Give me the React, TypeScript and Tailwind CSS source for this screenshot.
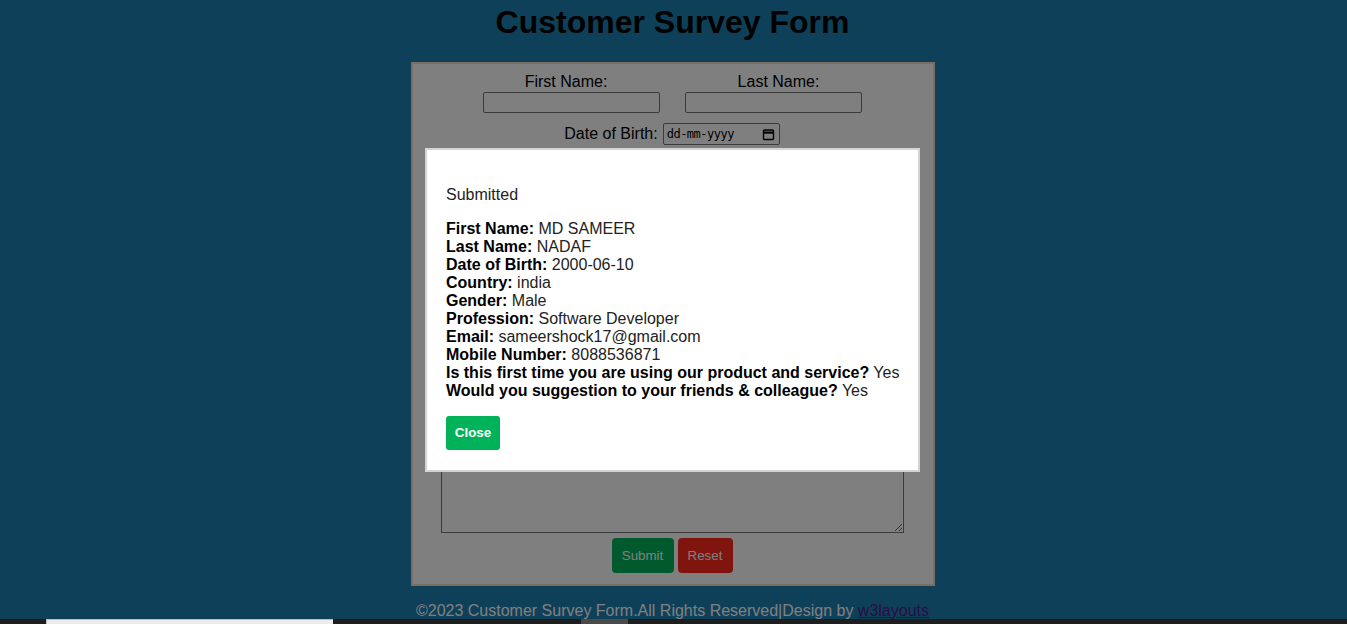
import React from 'react';

const details: Array<[string, string]> = [
  ['First Name:', 'MD SAMEER'],
  ['Last Name:', 'NADAF'],
  ['Date of Birth:', '2000-06-10'],
  ['Country:', 'india'],
  ['Gender:', 'Male'],
  ['Profession:', 'Software Developer'],
  ['Email:', 'sameershock17@gmail.com'],
  ['Mobile Number:', '8088536871'],
  ['Is this first time you are using our product and service?', 'Yes'],
  ['Would you suggestion to your friends & colleague?', 'Yes'],
];

function CalendarIcon() {
  return (
    <svg width="13" height="13" viewBox="0 0 13 13" fill="none" stroke="#000" strokeWidth="1.4">
      <rect x="1.5" y="2" width="10" height="9.5" rx="1" />
      <line x1="1.5" y1="4.6" x2="11.5" y2="4.6" strokeWidth="2.2" />
    </svg>
  );
}

export default function App() {
  return (
    <div className="min-h-screen bg-[#1c80b2] font-['Liberation_Sans',Arial,sans-serif] text-black">
      <h1 className="pt-[4px] pr-[2px] text-center text-[32px] font-bold leading-[37px]">Customer Survey Form</h1>

      <form className="ml-[411px] mt-[21px] flex h-[524px] w-[524px] flex-col items-center border-2 border-[#f0dcc4] bg-white pt-[9px] pr-[2px] text-[16px] leading-[18px]">
        <div className="flex gap-[25px]">
          <div className="flex flex-col items-center">
            <label className="pr-[10px]">First Name:</label>
            <input className="mt-[1px] h-[21px] w-[177px] rounded-[2px] border border-[#767676]" />
          </div>
          <div className="flex flex-col items-center">
            <label className="pl-[11px]">Last Name:</label>
            <input className="mt-[1px] h-[21px] w-[177px] rounded-[2px] border border-[#767676]" />
          </div>
        </div>

        <div className="mt-[10px] flex h-[22px] items-center gap-[5px]">
          <span>Date of Birth:</span>
          <div className="flex h-[22px] w-[117px] items-center justify-between rounded-[2px] border border-[#767676] pl-[3px] pr-[4px] font-['DejaVu_Sans_Mono',monospace] text-[12px] tracking-[-0.5px]">
            <span>dd-mm-yyyy</span>
            <CalendarIcon />
          </div>
        </div>

        {/* rest of the fields sit behind the dialog */}
        <div className="h-[288px]" />

        <textarea className="h-[100px] w-[463px] border border-[#767676]" />

        <div className="mt-[5px] flex gap-[4px]">
          <button type="button" className="h-[35px] w-[62px] rounded-[4px] bg-[#00b45a] text-[13.33px] text-white">Submit</button>
          <button type="button" className="h-[35px] w-[55px] rounded-[4px] bg-[#ff2a1c] text-[13.33px] text-white">Reset</button>
        </div>
      </form>

      <footer className="mt-[16px] pr-[2px] text-center leading-[18px] text-white">
        ©2023 Customer Survey Form.All Rights Reserved|Design by <a href="#" className="text-[#551a8b] underline">w3layouts</a>
      </footer>

      <div className="fixed inset-0 z-10 bg-black/50" />

      <div className="fixed left-[425px] top-[148px] z-20 w-[495px] border-2 border-[#d4d4d4] bg-white py-[20px] pl-[19px] pr-[10px] text-[16px] leading-[18px] text-[#222]">
        <p className="mt-[16px]">Submitted</p>
        <p className="mt-[16px] whitespace-nowrap">
          {details.map(([k, v]) => (
            <span key={k} className="block">
              <b className="text-black">{k}</b> {v}
            </span>
          ))}
        </p>
        <button type="button" className="mt-[16px] h-[34px] w-[54px] rounded-[3px] bg-[#00b35a] text-[13.33px] font-bold text-white">Close</button>
      </div>

      <div className="fixed bottom-0 left-0 right-0 z-30 flex h-[5px] bg-[#1e1e1e]">
        <div className="ml-[46px] h-[5px] w-[287px] border-l border-t border-[#bdbdbd] bg-[#ececec]" />
        <div className="ml-[248px] h-[5px] w-[47px] bg-[#4a4a4a]" />
      </div>
    </div>
  );
}
